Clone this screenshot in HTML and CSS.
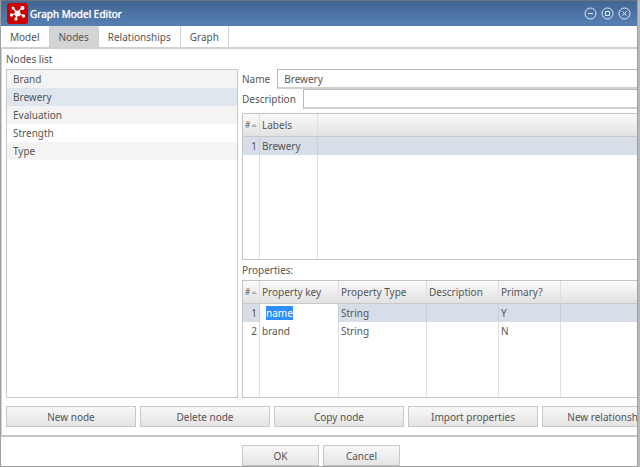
FILE: index.html
```html
<!DOCTYPE html>
<html lang="en">
<head>
    <meta charset="utf-8">
    <meta name="viewport" content="width=device-width, initial-scale=1.0">
    <title>Graph Model Editor</title>
    <link rel="stylesheet" href="styles.css">
</head>
<body>
    <div class="window">
        <header class="titleBar">
            <svg class="logo" width="21" height="21" viewBox="0 0 21 21" aria-hidden="true">
                <rect width="21" height="21" rx="3" fill="#cc0000"/>
                <path d="M10 10L6 5M10 10L15 5M10 10L5 12M10 10L17 13M10 10L9 16" stroke="#fff" stroke-width="1.3"/>
                <g fill="#fff">
                    <circle cx="10.5" cy="10.5" r="3"/>
                    <circle cx="6" cy="5" r="1.5"/>
                    <circle cx="15.5" cy="5" r="2"/>
                    <circle cx="4.5" cy="12" r="1.7"/>
                    <circle cx="16.5" cy="13" r="1.7"/>
                    <circle cx="9" cy="16" r="1.7"/>
                </g>
            </svg>
            <h1>Graph Model Editor</h1>
            <div class="windowButtons">
                <button type="button" aria-label="Minimize">
                    <svg width="13" height="13" viewBox="0 0 13 13"><circle cx="6.5" cy="6.5" r="5.5"/><path d="M4 6.5h5"/></svg>
                </button>
                <button type="button" aria-label="Maximize">
                    <svg width="13" height="13" viewBox="0 0 13 13"><circle cx="6.5" cy="6.5" r="5.5"/><path d="M4.5 4.5h4v4h-4z"/></svg>
                </button>
                <button type="button" aria-label="Close">
                    <svg width="13" height="13" viewBox="0 0 13 13"><circle cx="6.5" cy="6.5" r="5.5"/><path d="M4.5 4.5l4 4M8.5 4.5l-4 4"/></svg>
                </button>
            </div>
        </header>

        <nav class="tabs">
            <button type="button">Model</button>
            <button type="button" class="active">Nodes</button>
            <button type="button">Relationships</button>
            <button type="button">Graph</button>
        </nav>

        <main class="panel">
            <h2>Nodes list</h2>
            <div class="columns">
                <ul class="nodeList">
                    <li>Brand</li>
                    <li class="selected">Brewery</li>
                    <li>Evaluation</li>
                    <li>Strength</li>
                    <li>Type</li>
                </ul>

                <div class="details">
                    <div class="field">
                        <label for="nodeName">Name</label>
                        <input type="text" id="nodeName" value="Brewery">
                    </div>
                    <div class="field">
                        <label for="nodeDescription">Description</label>
                        <input type="text" id="nodeDescription">
                    </div>

                    <div class="gridBox labelsBox">
                        <table>
                            <colgroup><col class="colNum"><col class="colLabel"><col></colgroup>
                            <thead>
                                <tr><th class="num">#<i class="sort"></i></th><th>Labels</th><th></th></tr>
                            </thead>
                            <tbody>
                                <tr class="selected"><td class="num">1</td><td>Brewery</td><td></td></tr>
                                <tr class="rest"><td></td><td></td><td></td></tr>
                            </tbody>
                        </table>
                    </div>

                    <h2>Properties:</h2>
                    <div class="gridBox propsBox">
                        <table>
                            <colgroup><col class="colNum"><col class="colKey"><col class="colType"><col class="colDesc"><col class="colPrimary"><col></colgroup>
                            <thead>
                                <tr><th class="num">#<i class="sort"></i></th><th>Property key</th><th>Property Type</th><th>Description</th><th>Primary?</th><th></th></tr>
                            </thead>
                            <tbody>
                                <tr class="selected"><td class="num">1</td><td class="editing"><mark>name</mark></td><td>String</td><td></td><td>Y</td><td></td></tr>
                                <tr><td class="num">2</td><td>brand</td><td>String</td><td></td><td>N</td><td></td></tr>
                                <tr class="rest"><td></td><td></td><td></td><td></td><td></td><td></td></tr>
                            </tbody>
                        </table>
                    </div>
                </div>
            </div>

            <div class="actions">
                <button type="button" class="btn">New node</button>
                <button type="button" class="btn">Delete node</button>
                <button type="button" class="btn">Copy node</button>
                <button type="button" class="btn">Import properties</button>
                <button type="button" class="btn">New relationship</button>
            </div>
        </main>

        <footer class="dialogButtons">
            <button type="button" class="btn">OK</button>
            <button type="button" class="btn">Cancel</button>
        </footer>
    </div>
</body>
</html>
```
FILE: styles.css
```css
* {
    box-sizing: border-box;
}
body {
    margin: 0;
    padding-right: 2px;
    background: #b9b9b9;
    color: #555;
    font-family: "Noto Sans", Verdana, sans-serif;
    font-size: 10px;
    line-height: 18px;
}
button, input {
    font: inherit;
    color: inherit;
}
.window {
    display: flex;
    flex-direction: column;
    min-height: 100vh;
    background: #fff;
    border: 1px solid #a0a0a0;
    border-top-color: #6b7480;
    overflow: hidden;
}

/* title bar */
.titleBar {
    display: flex;
    align-items: center;
    gap: 2px;
    height: 25px;
    padding: 0 6px;
    background: linear-gradient(#426593, #5680b4);
    color: #fff;
}
.titleBar h1 {
    flex: 1;
    margin: 0;
    font-size: 10px;
    font-weight: normal;
    text-shadow: 0 0 1px #fff;
}
.windowButtons {
    display: flex;
    gap: 4px;
}
.windowButtons button {
    display: flex;
    padding: 0;
    border: 0;
    background: none;
}
.windowButtons svg {
    fill: none;
    stroke: #e4ecf6;
}

/* tabs */
.tabs {
    display: flex;
    height: 23px;
    border-bottom: 2px solid #d0d0d0;
}
.tabs button {
    padding: 0 9px;
    border: 0;
    border-right: 1px solid #d0d0d0;
    background: #fff;
}
.tabs .active {
    background: #d4d4d4;
}

/* main panel */
.panel {
    flex: 1;
    display: flex;
    flex-direction: column;
    padding: 0 0 8px 4px;
    border-left: 1px solid #d0d0d0;
    border-bottom: 2px solid #c4c4c4;
    overflow: hidden;
}
h2 {
    margin: 0;
    font-size: 10px;
    font-weight: normal;
    line-height: 20px;
}
.columns {
    flex: 1;
    display: flex;
    gap: 4px;
}
.nodeList {
    width: 232px;
    margin: 0;
    padding: 0;
    border: 1px solid #c8c8c8;
    list-style: none;
}
.nodeList li {
    padding-left: 6px;
}
.nodeList li:nth-child(odd) {
    background: #f4f4f4;
}
.nodeList li.selected {
    background: #dfe6ee;
}
.details {
    flex: 1;
    display: flex;
    flex-direction: column;
    min-width: 0;
}
.field {
    display: flex;
    align-items: center;
    gap: 7px;
    height: 20px;
}
.field input {
    flex: 1;
    height: 20px;
    padding: 0 6px;
    border: 1px solid #b8b8b8;
    border-right: 0;
    border-bottom: 2px solid #d0d0d0;
}

/* grids */
.gridBox {
    display: flex;
    border: 1px solid #c4c4c4;
    border-right: 0;
}
.labelsBox {
    height: 147px;
    margin-top: 4px;
}
.propsBox {
    flex: 1;
}
table {
    width: 100%;
    table-layout: fixed;
    border-collapse: separate;
    border-spacing: 0;
}
.colNum { width: 17px; }
.colLabel { width: 58px; }
.colKey { width: 79px; }
.colType { width: 88px; }
.colDesc { width: 72px; }
.colPrimary { width: 62px; }
th, td {
    height: 18px;
    padding: 0 2px;
    border-right: 1px solid #dedede;
    text-align: left;
    font-weight: normal;
    white-space: nowrap;
}
th {
    height: 23px;
    border-bottom: 1px solid #c8c8c8;
    background: linear-gradient(#fafafa, #e2e2e2);
}
th:last-child, td:last-child {
    border-right: 0;
}
td.num {
    text-align: right;
}
th.num {
    font-size: 8px;
}
.sort {
    display: inline-block;
    margin-left: 1px;
    border: 3px solid transparent;
    border-top: 0;
    border-bottom-color: #b0b0b0;
    vertical-align: middle;
}
tr.selected td {
    background: #d7dee7;
    border-right-color: #c8d0da;
}
tr.selected td.editing {
    padding-left: 6px;
    background: #fff;
}
mark {
    background: #3090ff;
    color: #fff;
}
.rest td {
    height: auto;
}

/* buttons */
.btn {
    flex: none;
    height: 21px;
    padding: 0;
    border: 1px solid #c8c8c8;
    background: linear-gradient(#f8f8f8, #e4e4e4);
}
.actions {
    display: flex;
    gap: 4px;
    margin-top: 8px;
}
.actions .btn {
    width: 130px;
}
.dialogButtons {
    display: flex;
    gap: 4px;
    padding: 8px 0 0 241px;
}
.dialogButtons .btn {
    width: 77px;
}
```
